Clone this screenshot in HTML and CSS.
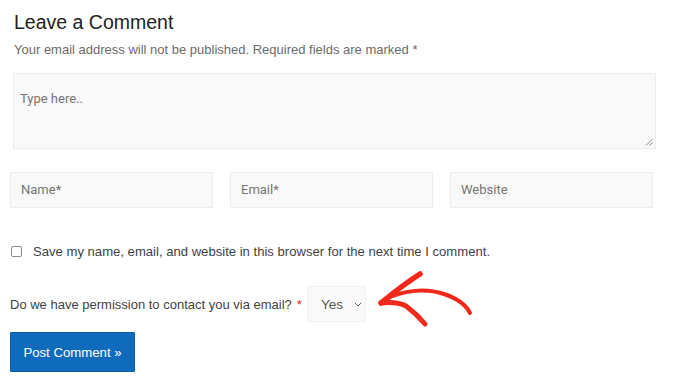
FILE: index.html
```html
<!DOCTYPE html>
<html>
<head>
<meta charset="utf-8">
<link rel="stylesheet" href="styles.css">
</head>
<body>
<div class="page">
  <h3 class="title">Leave a Comment</h3>
  <p class="note">Your email address will not be published. Required fields are marked *</p>
  <div class="textarea-wrap">
    <div class="textarea"><span class="ph">Type here..</span>
      <svg class="grip" width="8" height="8" viewBox="0 0 8 8"><path d="M1 7.5L7.5 1M4.5 7.5L7.5 4.5" stroke="#888" stroke-width="1"/></svg>
    </div>
  </div>
  <div class="fields">
    <div class="field"><span class="ph">Name*</span></div>
    <div class="field"><span class="ph">Email*</span></div>
    <div class="field"><span class="ph">Website</span></div>
  </div>
  <div class="save">
    <span class="check"></span>
    <span class="save-text">Save my name, email, and website in this browser for the next time I comment.</span>
  </div>
  <div class="perm">
    <span class="perm-label">Do we have permission to contact you via email?</span>
    <span class="req">*</span>
    <div class="select"><span>Yes</span>
      <svg class="chev" width="8" height="5" viewBox="0 0 8 5"><path d="M0.8 0.8l3.2 3.2L7.2 0.8" fill="none" stroke="#666" stroke-width="1"/></svg>
    </div>
    <svg class="arrow" width="110" height="62" viewBox="0 0 110 62">
      <g fill="none" stroke="#f2291a" stroke-linecap="round" stroke-linejoin="round">
        <path d="M7 35 C18 26 30 16 46 6" stroke-width="5.5"/>
        <path d="M7 35 C16 34 26 35 32 38 C40 44 46 50 51 56" stroke-width="5"/>
        <path d="M12 31 C30 22 52 20 70 26 C82 30 92 37 96 45" stroke-width="4"/>
      </g>
    </svg>
  </div>
  <button class="btn">Post Comment »</button>
</div>
</body>
</html>
```
FILE: styles.css
```css
* { box-sizing: border-box; }
body {
  margin: 0;
  background: #fff;
  font-family: "Liberation Sans", Arial, sans-serif;
  color: #3a3a3a;
}
.page {
  padding: 9px 24px 0 10px;
  width: 680px;
}
.title {
  margin: 0 0 0 4px;
  font-size: 19.5px;
  font-weight: 400;
  line-height: 26px;
  color: #222;
}
.note {
  margin: 7px 0 0 4px;
  font-size: 13px;
  line-height: 16px;
  color: #6b6b6b;
}
.textarea-wrap {
  margin-top: 15px;
  padding-left: 3px;
}
.textarea {
  position: relative;
  width: 643px;
  height: 76px;
  background: #f9f9f9;
  border: 1px solid #ececec;
  padding: 15px 6px;
}
.ph {
  font-family: Roboto, "Noto Sans", sans-serif;
  font-size: 13px;
  color: #757575;
  line-height: 16px;
}
.grip {
  position: absolute;
  right: 2px;
  bottom: 2px;
}
.fields {
  display: flex;
  gap: 17px;
  margin-top: 23px;
}
.field {
  width: 203px;
  height: 36px;
  background: #f9f9f9;
  border: 1px solid #ececec;
  display: flex;
  align-items: center;
  padding-left: 10px;
}
.save {
  display: flex;
  align-items: center;
  margin-top: 34px;
  margin-left: 1px;
  height: 18px;
}
.check {
  width: 11px;
  height: 11px;
  border: 1px solid #8a8a8a;
  border-radius: 2px;
  background: #fff;
}
.save-text {
  margin-left: 11px;
  font-size: 13.1px;
  color: #3f3f3f;
}
.perm {
  position: relative;
  display: flex;
  align-items: center;
  margin-top: 26px;
  height: 36px;
}
.perm-label {
  font-size: 13px;
  color: #3f3f3f;
}
.req {
  color: #e0241b;
  font-size: 13px;
  margin-left: 5px;
}
.select {
  margin-left: 5px;
  width: 59px;
  height: 36px;
  background: #f9f9f9;
  border: 1px solid #efefef;
  border-radius: 2px;
  display: flex;
  align-items: center;
  justify-content: space-between;
  padding: 0 3px 0 13px;
  font-size: 13.5px;
  color: #555;
}
.chev { margin-top: 1px; }
.arrow {
  position: absolute;
  left: 364px;
  top: -18px;
}
.btn {
  display: block;
  margin-top: 10px;
  width: 125px;
  height: 40px;
  border: 1px solid #0b5ea3;
  background: #0f6cbd;
  color: #fff;
  font-family: "Liberation Sans", Arial, sans-serif;
  font-size: 13.2px;
  padding: 0;
  border-radius: 1px;
}
```
